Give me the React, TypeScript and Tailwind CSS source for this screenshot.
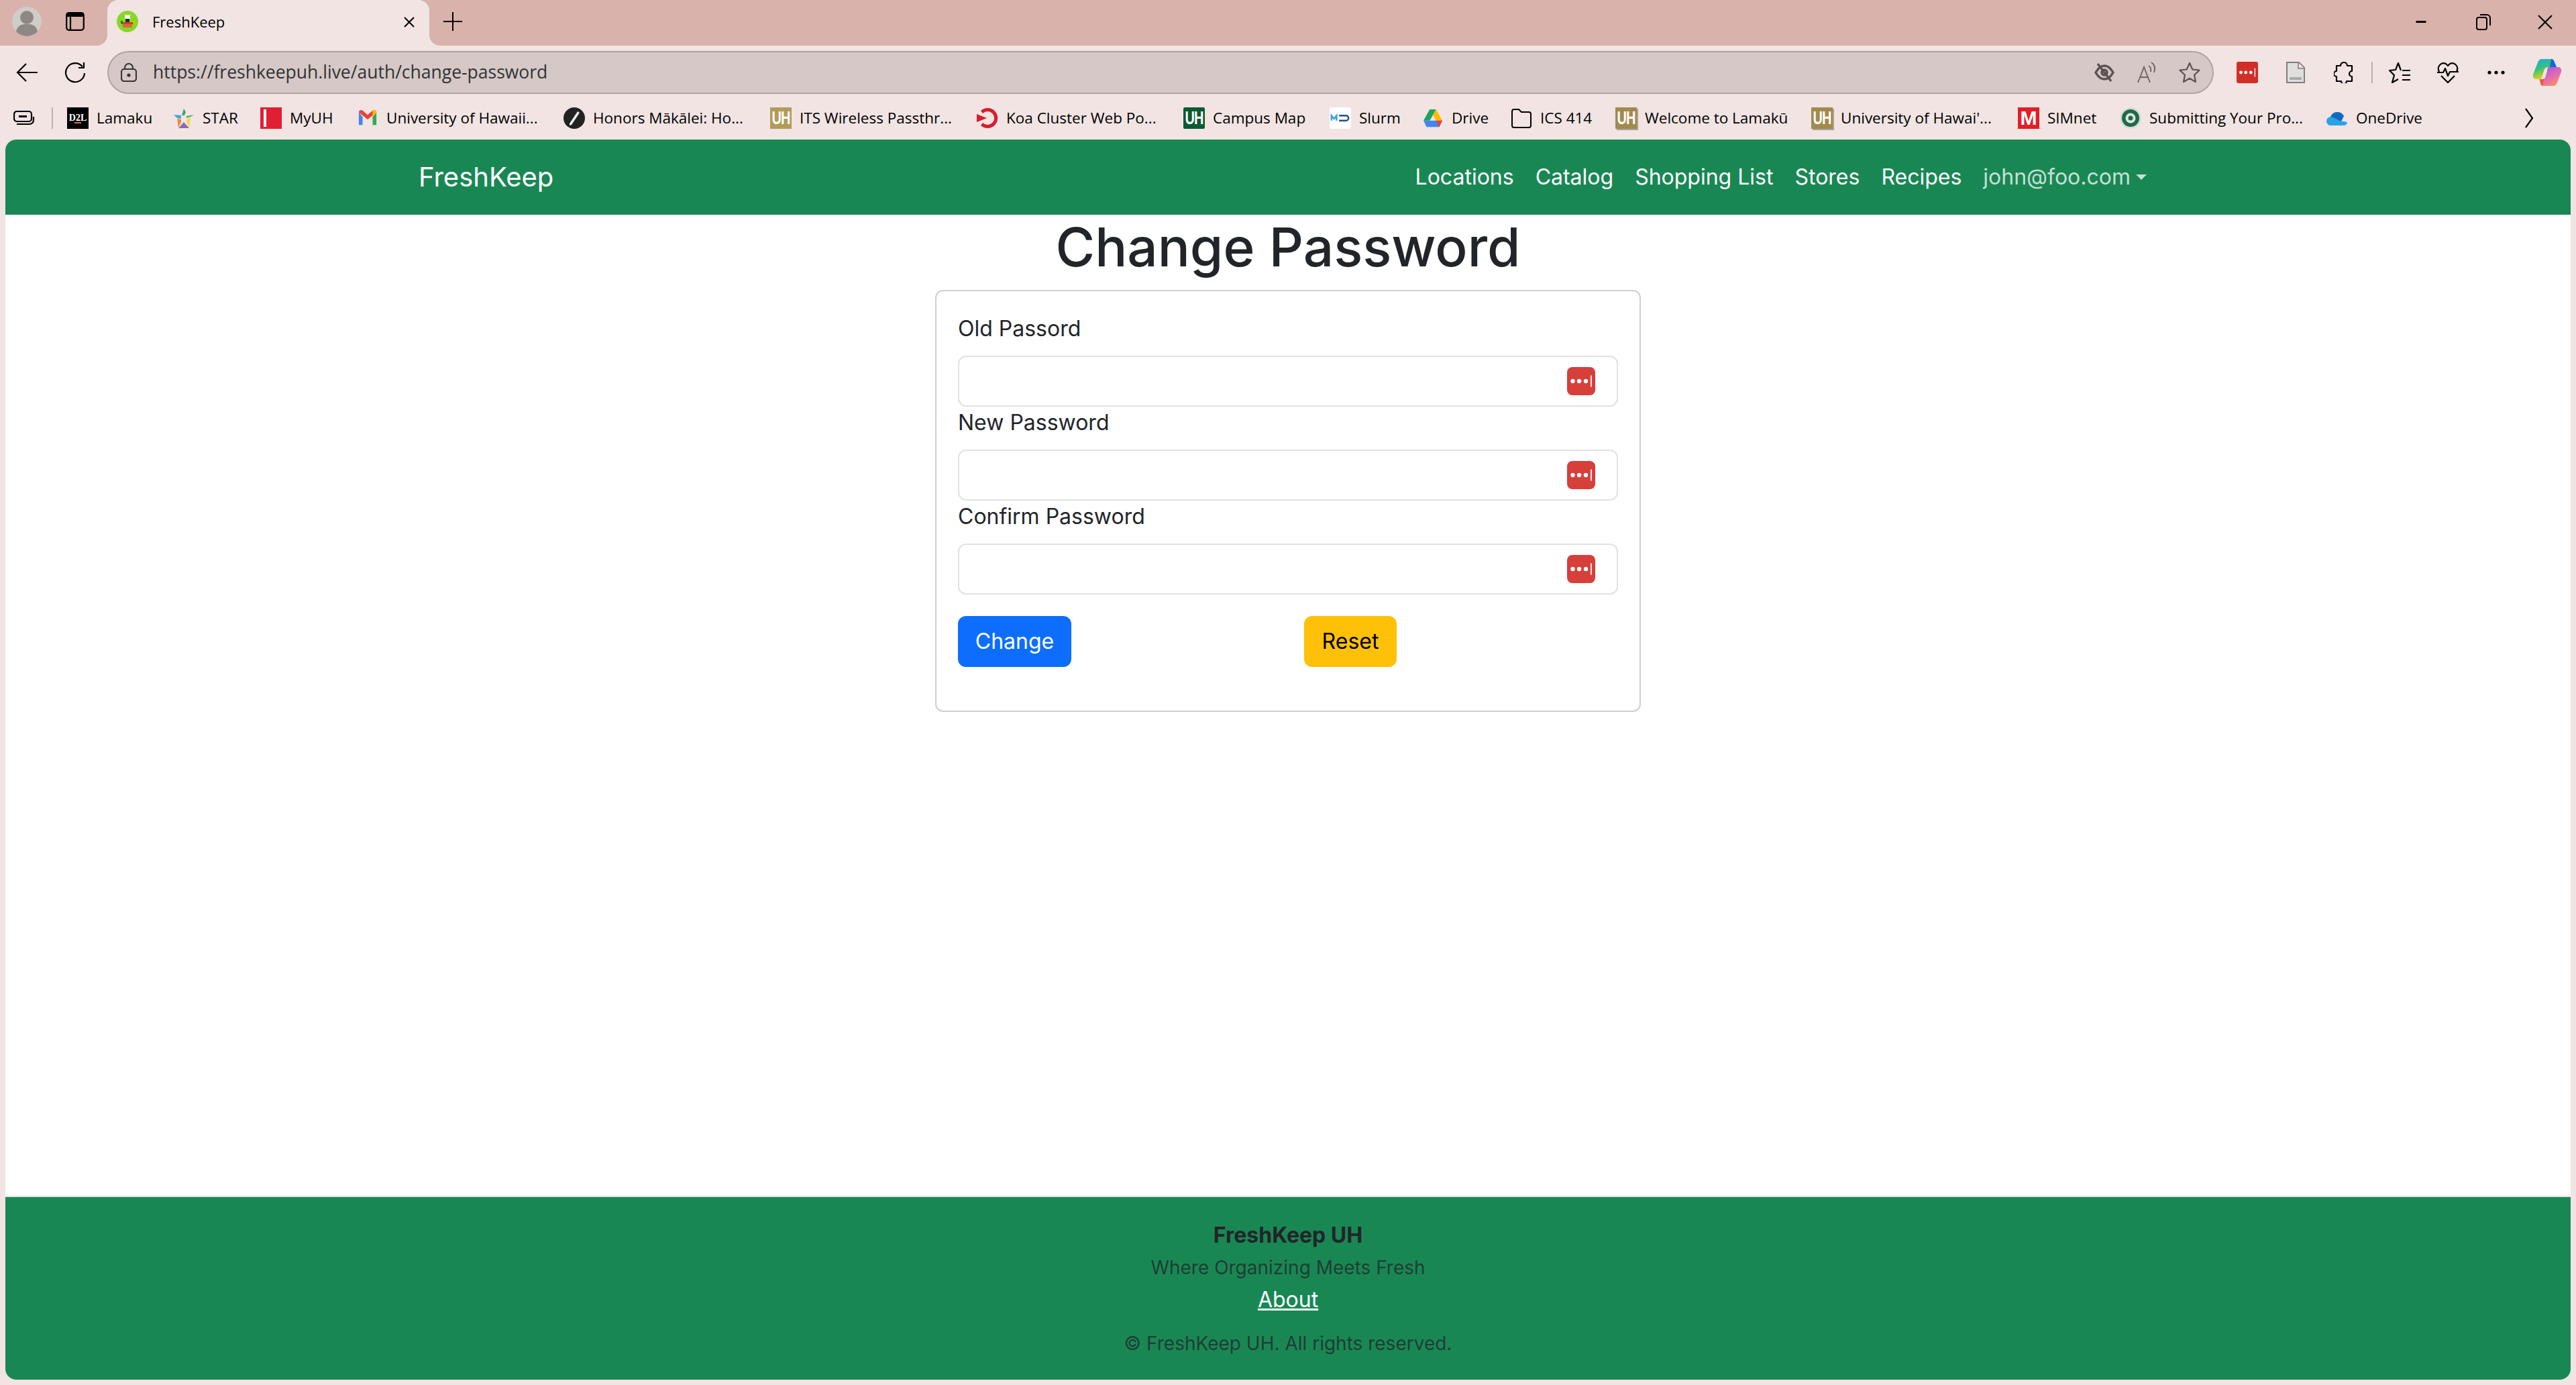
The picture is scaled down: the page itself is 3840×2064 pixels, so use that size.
import React from "react";

const UI = "font-['Open_Sans','Noto_Sans',sans-serif]";

function LastPass({ size, bg, rounded }: { size: string; bg: string; rounded: string }) {
  return (
    <span className={`${size} ${bg} ${rounded} flex items-center justify-end shrink-0`}>
      <svg viewBox="0 0 42 42" className="w-full h-full">
        <circle cx="8.5" cy="21" r="3.2" fill="#fff" />
        <circle cx="18" cy="21" r="3.2" fill="#fff" />
        <circle cx="28" cy="21" r="3.2" fill="#fff" />
        <rect x="35" y="12.5" width="1.8" height="17" fill="#fff" />
      </svg>
    </span>
  );
}

function UHTile({ bg, shadow }: { bg: string; shadow?: boolean }) {
  return (
    <span
      className={`w-[32px] h-[32px] ${bg} ${shadow ? "shadow-[2px_2px_0_#a9a29a]" : ""} flex items-center justify-center text-white font-['Liberation_Sans',sans-serif] font-bold text-[20px] leading-none tracking-[-1px] shrink-0`}
    >
      <span className="inline-block scale-y-[1.35]">UH</span>
    </span>
  );
}

const bookmarks: { icon: React.ReactNode; text: string; w: string }[] = [
  {
    text: "Lamaku",
    w: "w-[79px]",
    icon: (
      <span className="w-[32px] h-[32px] bg-black flex flex-col items-center justify-center text-white font-['Liberation_Serif',serif] font-bold text-[14px] leading-none">
        D2L
        <span className="w-[10px] h-[2px] bg-[#e8702a] mt-[-1px]" />
      </span>
    ),
  },
  {
    text: "STAR",
    w: "w-[51px]",
    icon: (
      <svg viewBox="0 0 32 32" className="w-[32px] h-[32px]">
        <polygon points="16,2 13,12 17,12 19,7" fill="#3fa66a" />
        <polygon points="1,11 12,12 12,17 6,16" fill="#3aa9dc" />
        <polygon points="31,11 20,13 20,16 26,14" fill="#4bae55" />
        <polygon points="6,17 12,18 12,22 8,30" fill="#ef8a33" />
        <polygon points="26,15 20,19 21,23 24,30" fill="#f3d93b" />
        <polygon points="16,22 8,31 24,31" fill="#8a6ab8" />
      </svg>
    ),
  },
  {
    text: "MyUH",
    w: "w-[65px]",
    icon: (
      <span className="w-[32px] h-[32px] bg-[#e01f35] flex items-center pl-[5px]">
        <span className="w-[4px] h-[26px] bg-white" />
      </span>
    ),
  },
  {
    text: "University of Hawaii...",
    w: "w-[229px]",
    icon: (
      <svg viewBox="0 0 32 32" className="w-[30px] h-[32px]">
        <path d="M2 7v20h6V14z" fill="#4285f4" />
        <path d="M24 14v13h6V7z" fill="#34a853" />
        <path d="M2 7l14 11L30 7v-1a4 4 0 0 0-6-2l-8 7-8-7a4 4 0 0 0-6 2z" fill="#ea4335" />
        <path d="M24 4l-0 10 6-7v-1a4 4 0 0 0-6-2z" fill="#fbbc04" />
      </svg>
    ),
  },
  {
    text: "Honors Mākālei: Ho...",
    w: "w-[229px]",
    icon: (
      <svg viewBox="0 0 32 32" className="w-[32px] h-[32px]">
        <circle cx="16" cy="16" r="16" fill="#222" />
        <path d="M21 6l3 2-12 18-3 1 0-3z" fill="#eee" />
      </svg>
    ),
  },
  { text: "ITS Wireless Passthr...", w: "w-[229px]", icon: <UHTile bg="bg-[#b29a5b]" /> },
  {
    text: "Koa Cluster Web Po...",
    w: "w-[229px]",
    icon: (
      <svg viewBox="0 0 32 32" className="w-[32px] h-[32px]">
        <path d="M6 5a15 15 0 1 1 0 22l3-4a10 10 0 1 0 0-14z" fill="#d2202f" />
        <path d="M0 10l15 6-15 6z" fill="#d2202f" />
      </svg>
    ),
  },
  { text: "Campus Map", w: "w-[139px]", icon: <UHTile bg="bg-[#0b5a33] rounded-[2px]" /> },
  {
    text: "Slurm",
    w: "w-[59px]",
    icon: (
      <span className="w-[32px] h-[32px] bg-white rounded-[3px] flex items-center justify-center">
        <svg viewBox="0 0 32 32" className="w-[30px] h-[30px]">
          <path d="M2 20v-8l4 5 4-5v8" fill="none" stroke="#3aa2dc" strokeWidth="2.6" />
          <path d="M14 12h11a4 4 0 0 1 0 8H14" fill="none" stroke="#1d4f91" strokeWidth="2.6" />
        </svg>
      </span>
    ),
  },
  {
    text: "Drive",
    w: "w-[53px]",
    icon: (
      <svg viewBox="0 0 32 32" className="w-[30px] h-[32px]">
        <polygon points="11,2 21,2 11,20 1,20" fill="#1ea362" />
        <polygon points="21,2 31,20 21,20 16,11" fill="#ffba00" />
        <polygon points="1,20 31,20 26,30 6,30" fill="#4285f4" />
        <polygon points="21,20 31,20 26,30" fill="#ea4335" />
      </svg>
    ),
  },
  {
    text: "ICS 414",
    w: "w-[77px]",
    icon: (
      <svg viewBox="0 0 32 32" className="w-[32px] h-[32px]" fill="none" stroke="#000" strokeWidth="2">
        <path d="M2 6a3 3 0 0 1 3-3h7l4 4h11a3 3 0 0 1 3 3v17a3 3 0 0 1-3 3H5a3 3 0 0 1-3-3z" />
      </svg>
    ),
  },
  { text: "Welcome to Lamakū", w: "w-[213px]", icon: <UHTile bg="bg-[#a3894e]" shadow /> },
  { text: "University of Hawai'...", w: "w-[229px]", icon: <UHTile bg="bg-[#a3894e]" shadow /> },
  {
    text: "SIMnet",
    w: "w-[73px]",
    icon: (
      <span className="w-[32px] h-[32px] bg-[#e01f26] flex items-center justify-center text-white font-['Liberation_Sans',sans-serif] font-bold text-[30px] leading-none">
        M
      </span>
    ),
  },
  {
    text: "Submitting Your Pro...",
    w: "w-[229px]",
    icon: (
      <svg viewBox="0 0 32 32" className="w-[32px] h-[32px]">
        <circle cx="16" cy="16" r="15.5" fill="#cfdcd4" />
        <circle cx="16" cy="16" r="13" fill="#1f6b48" />
        <circle cx="16" cy="16" r="7.5" fill="#dbe8df" />
        <circle cx="16" cy="16" r="3.5" fill="#1f6b48" />
      </svg>
    ),
  },
  {
    text: "OneDrive",
    w: "w-[100px]",
    icon: (
      <svg viewBox="0 0 32 32" className="w-[32px] h-[32px]">
        <path d="M6 14a11 11 0 0 1 20-1l-7 14H7z" fill="#0f6cbd" />
        <path d="M7 27a6.5 6.5 0 0 1-1-13l6 2 8 4 11 2a5.500 5.500 0 0 1-5 5z" fill="#29a3e8" />
      </svg>
    ),
  },
];

function InverseCorner({ flip }: { flip?: boolean }) {
  return (
    <svg
      viewBox="0 0 16 16"
      className={`absolute bottom-0 w-[16px] h-[16px] ${flip ? "left-full" : "right-full scale-x-[-1]"}`}
    >
      <path d="M0 0v16h16A16 16 0 0 1 0 0z" fill="#f1e4e3" />
    </svg>
  );
}

function PasswordField({ label }: { label: string }) {
  return (
    <div className="flex flex-col">
      <label className="h-[48px] leading-[48px] mb-[16px]">{label}</label>
      <div className="h-[76px] border-2 border-[#dee2e6] rounded-[12px] flex items-center justify-end pr-[32px]">
        <LastPass size="w-[42px] h-[42px]" bg="bg-[#d73f3a]" rounded="rounded-[8px]" />
      </div>
    </div>
  );
}

function NavLink({ children }: { children: React.ReactNode }) {
  return <a className="px-[16px] text-white whitespace-nowrap">{children}</a>;
}

export default function App() {
  return (
    <div className="w-[3840px] h-[2064px] bg-[#f1e4e3] flex flex-col overflow-hidden text-black">
      {/* Tab strip */}
      <div className="h-[68px] shrink-0 bg-[#d8b2ab] flex items-center">
        <svg viewBox="0 0 44 44" className="w-[44px] h-[44px] ml-[18px] mb-[4px]">
          <circle cx="22" cy="22" r="22" fill="#cfcdc8" />
          <circle cx="22" cy="16" r="10" fill="#8d8883" />
          <path d="M6 37c2-10 9-11 16-11s14 1 16 11a22 22 0 0 1-32 0z" fill="#8d8883" />
        </svg>
        <svg viewBox="0 0 28 28" className="w-[28px] h-[28px] ml-[36px] mb-[4px]" fill="none" stroke="#000" strokeWidth="2.200">
          <rect x="1.200" y="1.200" width="25.600" height="25.600" rx="3.500" />
          <path d="M1 1h26v6H1z" fill="#000" stroke="none" />
          <path d="M7 7v20" />
        </svg>
        <div className="relative self-end h-[68px] w-[480px] ml-[34px] bg-[#f1e4e3] rounded-t-[16px] flex items-center pl-[14px]">
          <InverseCorner />
          <InverseCorner flip />
          <svg viewBox="0 0 32 32" className="w-[32px] h-[32px] mb-[4px]">
            <circle cx="16" cy="16" r="16" fill="#86d926" />
            <rect x="12" y="6" width="8" height="6" fill="#fff" />
            <rect x="13" y="12" width="6" height="6" fill="#2b2b2b" />
            <rect x="7" y="17" width="18" height="3" fill="#c9432a" />
            <rect x="9" y="20" width="14" height="5" fill="#d1703c" />
            <rect x="6" y="15" width="3" height="4" fill="#1d7a35" />
            <rect x="24" y="15" width="3" height="4" fill="#e6b800" />
          </svg>
          <span className={`ml-[21px] mb-[4px] text-[22px] leading-none w-[108px] whitespace-nowrap ${UI}`}>FreshKeep</span>
          <svg viewBox="0 0 18 18" className="w-[18px] h-[18px] ml-[266px] mb-[2px]" stroke="#000" strokeWidth="2" fill="none">
            <path d="M2 2l14 14M16 2L2 16" />
          </svg>
        </div>
        <svg viewBox="0 0 28 28" className="w-[28px] h-[28px] ml-[21px] mb-[4px]" stroke="#000" strokeWidth="2">
          <path d="M14 0v28M0 14h28" />
        </svg>
        <svg viewBox="0 0 20 4" className="w-[20px] h-[3px] ml-[2910px] mb-[4px]">
          <rect width="20" height="4" fill="#000" />
        </svg>
        <svg viewBox="0 0 22 24" className="w-[22px] h-[24px] ml-[72px] mb-[2px]" fill="none" stroke="#000" strokeWidth="2">
          <rect x="1" y="5" width="15" height="18" rx="3" />
          <path d="M6 1h10a5 5 0 0 1 5 5v11" />
        </svg>
        <svg viewBox="0 0 22 22" className="w-[22px] h-[22px] ml-[70px] mb-[2px]" fill="none" stroke="#000" strokeWidth="2">
          <path d="M1 1l20 20M21 1L1 21" />
        </svg>
      </div>

      {/* Address toolbar */}
      <div className="h-[80px] shrink-0 flex items-center">
        <svg viewBox="0 0 32 28" className="w-[32px] h-[28px] ml-[24px]" fill="none" stroke="#000" strokeWidth="2.200">
          <path d="M15 1L2 14l13 13M2 14h30" />
        </svg>
        <svg viewBox="0 0 32 32" className="w-[32px] h-[32px] ml-[40px]" fill="none" stroke="#000" strokeWidth="2.200">
          <path d="M29 1v8h-8" />
          <path d="M27 7.500A14 14 0 1 0 30 17" />
        </svg>
        <div className="ml-[32px] w-[3140px] h-[64px] rounded-[32px] bg-[#d5c8c7] border-2 border-[#b0a4a3] flex items-center pl-[18px]">
          <svg viewBox="0 0 24 28" className="w-[24px] h-[28px]" fill="none" stroke="#3a3535" strokeWidth="2.200">
            <rect x="1" y="9" width="22" height="18" rx="4" />
            <path d="M6 9V7a6 6 0 0 1 12 0v2" />
            <circle cx="12" cy="18" r="1.500" fill="#3a3535" />
          </svg>
          <span className={`ml-[24px] text-[26.500px] w-[584px] whitespace-nowrap text-[#333] ${UI}`}>
            https://freshkeepuh.live/auth/change-password
          </span>
          <svg viewBox="0 0 30 30" className="w-[30px] h-[30px] ml-[2310px]" fill="none" stroke="#5c5352" strokeWidth="3.500">
            <path d="M2 15c4-7 8-10 13-10s9 3 13 10c-4 7-8 10-13 10S6 22 2 15z" />
            <circle cx="15" cy="15" r="4" />
            <path d="M5 2l20 26" />
          </svg>
          <svg viewBox="0 0 32 32" className="w-[32px] h-[32px] ml-[34px]" fill="none" stroke="#6b6160" strokeWidth="1.800">
            <path d="M1 31L10 8l9 23M4 23h12" />
            <path d="M17 6c3 2 4 5 3 9M21 1c5 3 6 9 4 15" />
          </svg>
          <svg viewBox="0 0 32 32" className="w-[32px] h-[32px] ml-[30px]" fill="none" stroke="#5c5352" strokeWidth="2.200" strokeLinejoin="round">
            <path d="M16 2l4.300 9.500 10.200 1.200-7.500 7 2 10.300-9-5.200-9 5.200 2-10.300-7.500-7 10.200-1.200z" />
          </svg>
        </div>
        <LastPass size="w-[32px] h-[32px] ml-[34px]" bg="bg-[#d32d27]" rounded="rounded-[3px]" />
        <svg viewBox="0 0 28 32" className="w-[28px] h-[32px] ml-[42px]">
          <path d="M1 1h18l8 8v22H1z" fill="#dfdfde" stroke="#7e7e7e" strokeWidth="2" />
          <path d="M18 1v9h9" fill="#f1e4e3" stroke="#7e7e7e" strokeWidth="1.500" />
          <rect x="5" y="23" width="18" height="4" fill="#a9a9a9" />
        </svg>
        <svg viewBox="0 0 30 32" className="w-[30px] h-[32px] ml-[43px]" fill="none" stroke="#000" strokeWidth="2.200" strokeLinejoin="round">
          <path d="M10 6a5 5 0 0 1 10 0h7v8a4 4 0 0 0 0 8v7h-8a4 4 0 0 1-8 0H4v-7a4 4 0 0 1 0-8V6z" />
        </svg>
        <div className="w-[2px] h-[32px] bg-[#bdb1b0] ml-[26px]" />
        <svg viewBox="0 0 32 32" className="w-[32px] h-[32px] ml-[24px]" fill="none" stroke="#000" strokeWidth="2.200" strokeLinejoin="round">
          <path d="M18 13L14 2l-4 10-9 1 7 7-3 11 9-5" />
          <path d="M20 13h12M20 20h12M20 27h12" />
        </svg>
        <svg viewBox="0 0 32 32" className="w-[32px] h-[32px] ml-[40px]" fill="none" stroke="#000" strokeWidth="2.200" strokeLinejoin="round">
          <path d="M3 15C-1 7 6 0 13 3l3 3 3-3c7-3 14 4 10 12" />
          <path d="M0 16h9l3-6 4 11 3-6h13" />
          <path d="M6 21l10 10 10-10" />
        </svg>
        <svg viewBox="0 0 26 6" className="w-[26px] h-[6px] ml-[43px]" fill="#000">
          <circle cx="3" cy="3" r="2.600" />
          <circle cx="13" cy="3" r="2.600" />
          <circle cx="23" cy="3" r="2.600" />
        </svg>
        <svg viewBox="0 0 44 40" className="w-[44px] h-[40px] ml-[41px]">
          <defs>
            <linearGradient id="cpA" x1="0" y1="0" x2="0.400" y2="1">
              <stop offset="0" stopColor="#1ea7e8" />
              <stop offset="0.500" stopColor="#35c27d" />
              <stop offset="1" stopColor="#f2d30f" />
            </linearGradient>
            <linearGradient id="cpB" x1="0.200" y1="0" x2="0.800" y2="1">
              <stop offset="0" stopColor="#a855e6" />
              <stop offset="0.600" stopColor="#e96fa8" />
              <stop offset="1" stopColor="#f79a4d" />
            </linearGradient>
          </defs>
          <path d="M14 0h14c3 0 4 2 5 5l3 7H24c-4 0-6 2-7 6l-3 10c-1 1-2 2-4 2H6c-4 0-6-3-5-7L8 5c1-3 3-5 6-5z" fill="url(#cpA)" />
          <path d="M28 0c3 0 4 2 5 5l3 7H26z" fill="#1467d6" />
          <path d="M24 12h14c4 0 6 3 5 7l-6 16c-1 3-3 5-6 5H17c-3 0-4-2-5-5l-2-5h5c2 0 3-1 4-2l3-10c0-3 1-6 2-6z" fill="url(#cpB)" />
          <path d="M12 30h6c-2 3-3 6-2 10-2 0-3-1-4-3z" fill="#ef5a2f" />
        </svg>
      </div>

      {/* Bookmarks */}
      <div className={`h-[60px] shrink-0 flex items-start pt-[12px] ${UI}`}>
        <svg viewBox="0 0 32 22" className="w-[32px] h-[22px] ml-[20px] mt-[5px]" fill="none" stroke="#000" strokeWidth="2.200">
          <rect x="1" y="1" width="26" height="15" rx="4" />
          <path d="M8 8.500h12" strokeWidth="3" />
          <path d="M5 20h19a6 6 0 0 0 6-6V9" />
        </svg>
        <div className="w-[2px] h-[32px] bg-[#bdb1b0] ml-[25px]" />
        <div className="flex items-center ml-[21px] gap-x-[35px]">
          {bookmarks.map((b) => (
            <div key={b.text} className="flex items-center gap-x-[12px]">
              <span className="w-[32px] h-[32px] flex items-center justify-center shrink-0">{b.icon}</span>
              <span className={`${b.w} whitespace-nowrap text-[22.500px] leading-[32px] text-black`}>{b.text}</span>
            </div>
          ))}
        </div>
        <svg viewBox="0 0 14 32" className="w-[14px] h-[32px] ml-[151px]" fill="none" stroke="#000" strokeWidth="2.200">
          <path d="M2 2l10 14L2 30" />
        </svg>
      </div>

      {/* Page */}
      <div className="flex-1 mx-[8px] mb-[8px] rounded-[16px] overflow-hidden bg-white flex flex-col font-['Inter',sans-serif] text-[32px] leading-[48px] text-[#212529]">
        <nav className="h-[112px] shrink-0 bg-[#198754]">
          <div className="w-[2592px] h-full mx-auto flex items-center justify-between">
            <a className="text-[40px] text-white whitespace-nowrap">FreshKeep</a>
            <div className="flex items-center">
              <NavLink>Locations</NavLink>
              <NavLink>Catalog</NavLink>
              <NavLink>Shopping List</NavLink>
              <NavLink>Stores</NavLink>
              <NavLink>Recipes</NavLink>
              <a className="pl-[16px] pr-[16px] text-white/75 flex items-center whitespace-nowrap">
                john@foo.com
                <span className="ml-[8px] w-0 h-0 border-x-[8px] border-x-transparent border-t-[8px] border-t-white/75" />
              </a>
            </div>
          </div>
        </nav>
        <main className="flex-1 flex flex-col items-center">
          <h1 className="text-[80px] leading-[96px] font-medium mb-[16px]">Change Password</h1>
          <div className="w-[1052px] h-[629px] border-2 border-[#cfcfcf] rounded-[12px] px-[32px] pt-[32px]">
            <PasswordField label="Old Passord" />
            <PasswordField label="New Password" />
            <PasswordField label="Confirm Password" />
            <div className="grid grid-cols-2 mt-[32px]">
              <div>
                <button className="h-[76px] w-[169px] rounded-[12px] bg-[#0d6efd] text-white">Change</button>
              </div>
              <div className="pl-[24px]">
                <button className="h-[76px] w-[138px] rounded-[12px] bg-[#ffc107] text-black">Reset</button>
              </div>
            </div>
          </div>
        </main>
        <footer className="h-[274px] shrink-0 bg-[#198754] border-t-2 border-[#dee2e6] flex flex-col items-center pt-[33px]">
          <strong className="font-bold leading-[48px]">FreshKeep UH</strong>
          <span className="text-[28px] leading-[42px] mt-[3px] text-[#212529]/75">Where Organizing Meets Fresh</span>
          <a className="text-white underline leading-[48px] mt-[3px]">About</a>
          <span className="text-[28px] leading-[42px] mt-[20px] text-[#212529]/75">© FreshKeep UH. All rights reserved.</span>
        </footer>
      </div>
    </div>
  );
}
